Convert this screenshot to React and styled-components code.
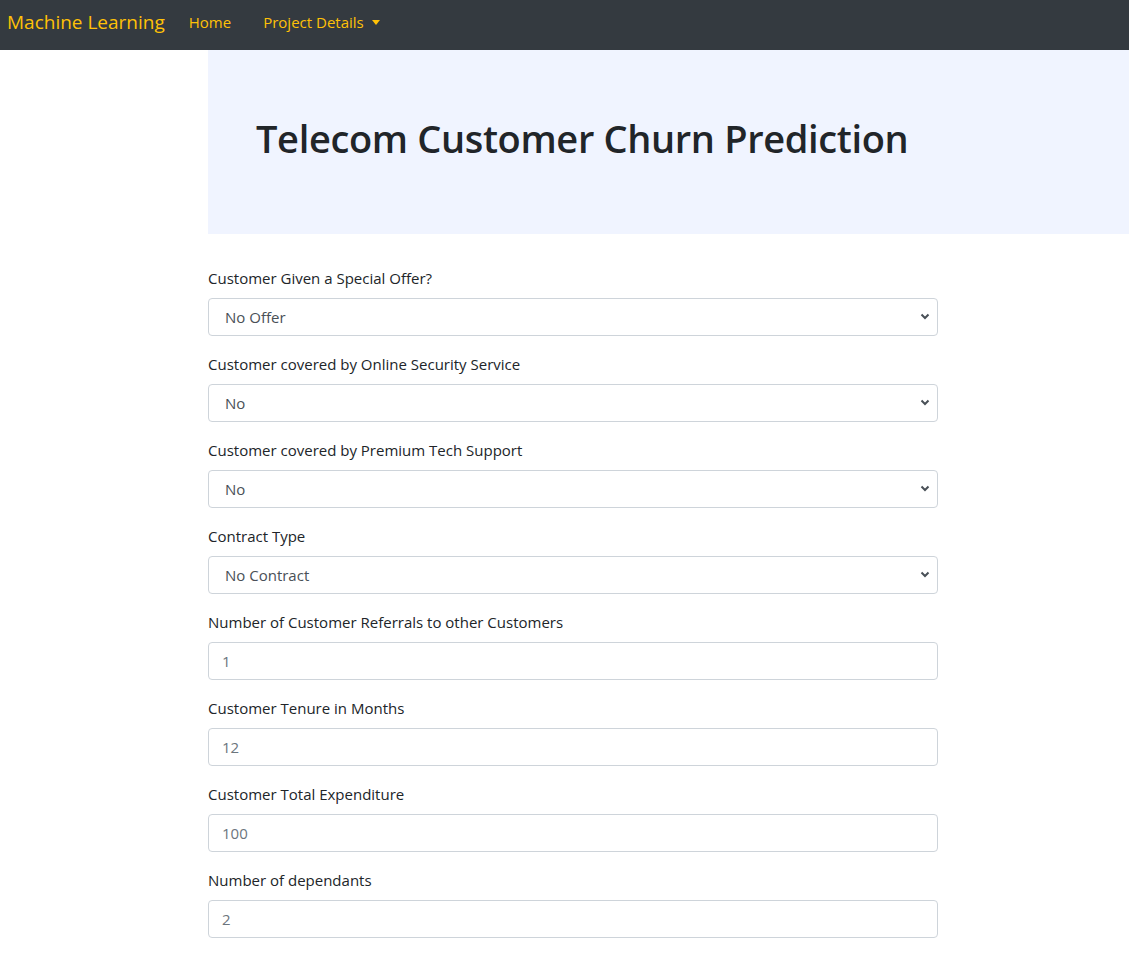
import React from "react";
import styled, {createGlobalStyle} from "styled-components";

const GlobalStyle = createGlobalStyle`
  * { box-sizing: border-box; }
  body {
    margin: 0;
    font-family: "Open Sans", "Noto Sans", sans-serif;
    font-size: 16px;
    line-height: 1.5;
    color: #212529;
    background: #fff;
  }
`;

const Navbar = styled.nav`
  height: 50px;
  background: #343a40;
  display: flex;
  align-items: center;
  padding: 0 7px 5px;
`;

const Brand = styled.a`
  color: #ffc107;
  font-size: 19px;
  margin-right: 24px;
  text-decoration: none;
`;

const NavLink = styled.a`
  color: #ffc107;
  font-size: 15px;
  margin-right: 32px;
  display: flex;
  align-items: center;
  text-decoration: none;
`;

const Caret = styled.span`
  display: inline-block;
  margin-left: 8px;
  border-top: 5px solid #ffc107;
  border-left: 4.5px solid transparent;
  border-right: 4.5px solid transparent;
`;

const Main = styled.main`
  padding-left: 208px;
`;

const Jumbotron = styled.header`
  background: #f0f4ff;
  padding: 64px 48px;
  margin-bottom: 32px;
`;

const Title = styled.h1`
  margin: 0 0 8px;
  font-size: 38px;
  font-weight: 600;
  letter-spacing: -0.35px;
  line-height: 48px;
  color: #212529;
`;

const Form = styled.form`
  width: 730px;
`;

const Group = styled.div`
  margin-bottom: 16px;
`;

const Label = styled.label`
  display: block;
  margin-bottom: 8px;
  font-size: 15px;
  line-height: 24px;
`;

const SelectWrap = styled.div`
  position: relative;
`;

const Select = styled.select`
  display: block;
  width: 100%;
  height: 38px;
  padding: 6px 32px 6px 16px;
  font: inherit;
  font-size: 15px;
  color: #495057;
  background: #fff;
  border: 1px solid #ced4da;
  border-radius: 4px;
  appearance: none;
`;

const Chevron = styled.svg`
  position: absolute;
  right: 8px;
  top: 15px;
  pointer-events: none;
`;

const Input = styled.input`
  display: block;
  width: 100%;
  height: 38px;
  padding: 6px 13px;
  font: inherit;
  font-size: 15px;
  color: #495057;
  background: #fff;
  border: 1px solid #ced4da;
  border-radius: 4px;

  &::placeholder {
    color: #6c757d;
    opacity: 1;
  }
`;

const selects = [
  ["Customer Given a Special Offer?", "No Offer"],
  ["Customer covered by Online Security Service", "No"],
  ["Customer covered by Premium Tech Support", "No"],
  ["Contract Type", "No Contract"]
];

const inputs = [
  ["Number of Customer Referrals to other Customers", "1"],
  ["Customer Tenure in Months", "12"],
  ["Customer Total Expenditure", "100"],
  ["Number of dependants", "2"]
];

export default function App() {
  return <>
    <GlobalStyle/>
    <Navbar>
      <Brand href="#">Machine Learning</Brand>
      <NavLink href="#">Home</NavLink>
      <NavLink href="#">Project Details<Caret/></NavLink>
    </Navbar>
    <Main>
      <Jumbotron>
        <Title>Telecom Customer Churn Prediction</Title>
      </Jumbotron>
      <Form>
        {selects.map(([label, val]) => <Group key={label}>
          <Label>{label}</Label>
          <SelectWrap>
            <Select defaultValue={val}>
              <option>{val}</option>
            </Select>
            <Chevron width="10" height="7" viewBox="0 0 10 7">
              <path d="M1.5 1.5l3.5 3.5 3.5-3.5" fill="none" stroke="#495057" strokeWidth="2"/>
            </Chevron>
          </SelectWrap>
        </Group>)}
        {inputs.map(([label, val]) => <Group key={label}>
          <Label>{label}</Label>
          <Input type="number" placeholder={val}/>
        </Group>)}
      </Form>
    </Main>
  </>;
}
